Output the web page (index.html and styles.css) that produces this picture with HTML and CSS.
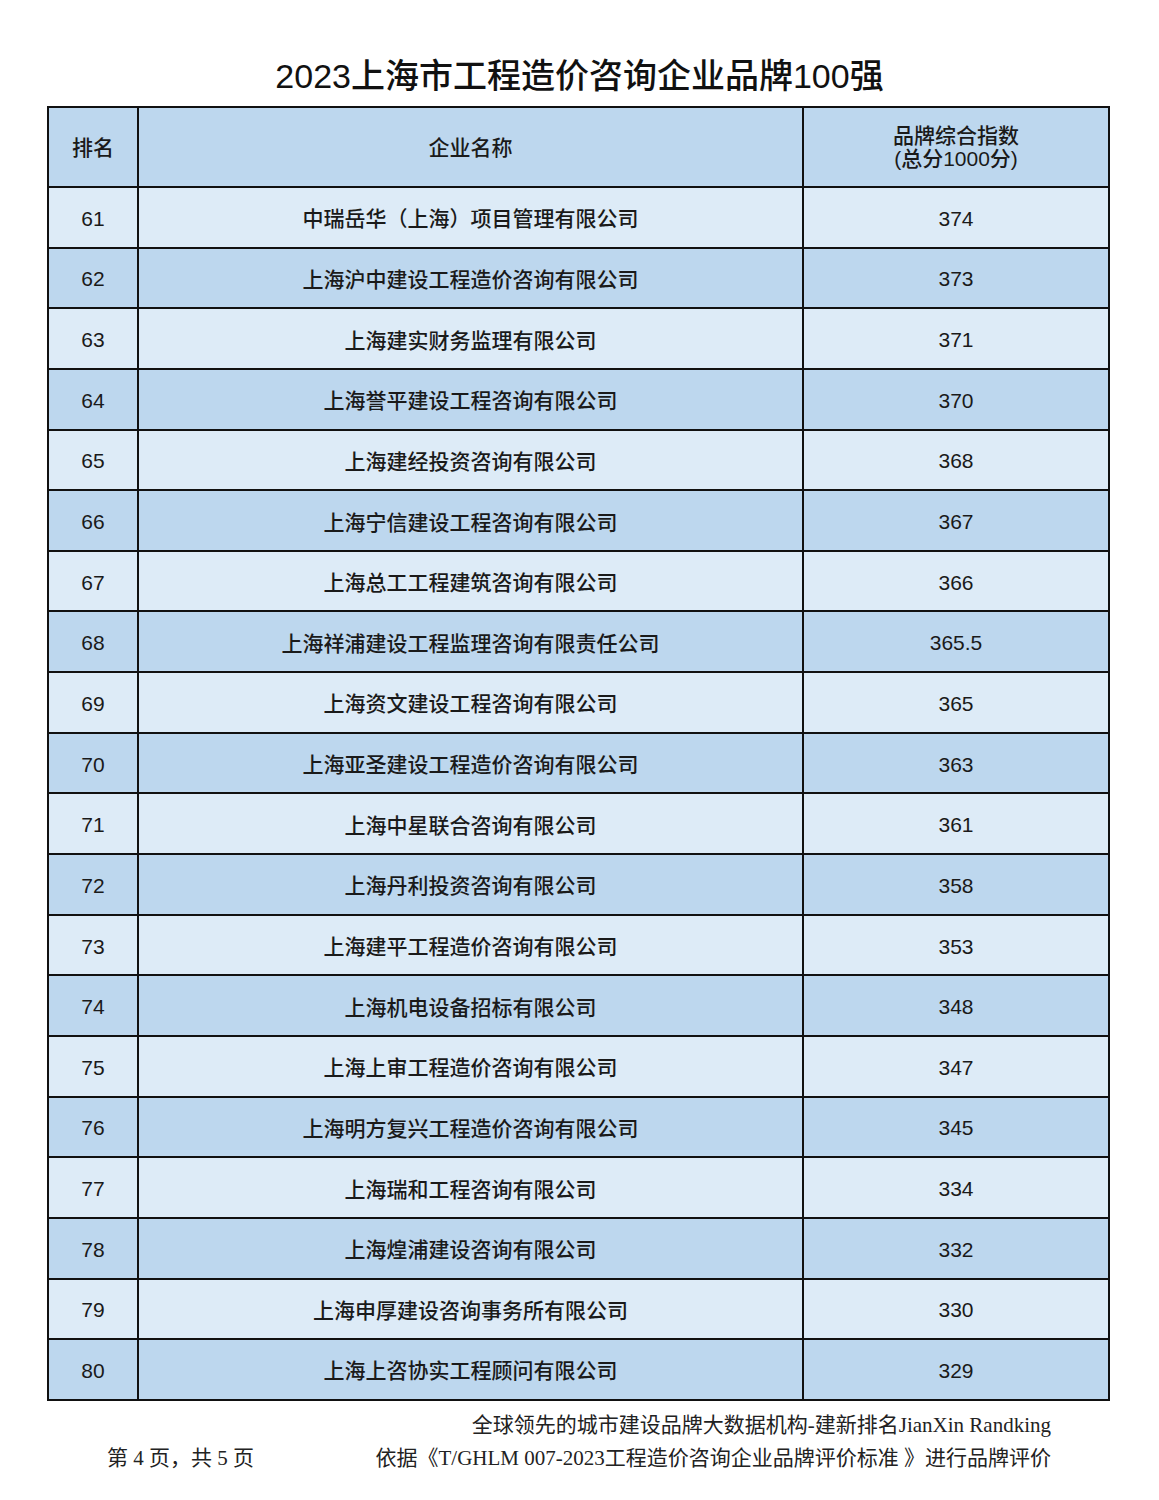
FILE: index.html
```html
<!DOCTYPE html>
<html lang="zh-CN">
<head>
<meta charset="utf-8">
<title>2023上海市工程造价咨询企业品牌100强</title>
<link rel="stylesheet" href="styles.css">
</head>
<body>
<div class="page">
  <h1 class="title">2023上海市工程造价咨询企业品牌100强</h1>
  <table class="rank">
    <colgroup>
      <col class="c-rank"><col class="c-name"><col class="c-score">
    </colgroup>
    <thead>
      <tr class="head">
        <th>排名</th>
        <th>企业名称</th>
        <th>品牌综合指数<br>(总分1000分)</th>
      </tr>
    </thead>
    <tbody>
      <tr class="lt"><td>61</td><td>中瑞岳华（上海）项目管理有限公司</td><td>374</td></tr>
      <tr class="dk"><td>62</td><td>上海沪中建设工程造价咨询有限公司</td><td>373</td></tr>
      <tr class="lt"><td>63</td><td>上海建实财务监理有限公司</td><td>371</td></tr>
      <tr class="dk"><td>64</td><td>上海誉平建设工程咨询有限公司</td><td>370</td></tr>
      <tr class="lt"><td>65</td><td>上海建经投资咨询有限公司</td><td>368</td></tr>
      <tr class="dk"><td>66</td><td>上海宁信建设工程咨询有限公司</td><td>367</td></tr>
      <tr class="lt"><td>67</td><td>上海总工工程建筑咨询有限公司</td><td>366</td></tr>
      <tr class="dk"><td>68</td><td>上海祥浦建设工程监理咨询有限责任公司</td><td>365.5</td></tr>
      <tr class="lt"><td>69</td><td>上海资文建设工程咨询有限公司</td><td>365</td></tr>
      <tr class="dk"><td>70</td><td>上海亚圣建设工程造价咨询有限公司</td><td>363</td></tr>
      <tr class="lt"><td>71</td><td>上海中星联合咨询有限公司</td><td>361</td></tr>
      <tr class="dk"><td>72</td><td>上海丹利投资咨询有限公司</td><td>358</td></tr>
      <tr class="lt"><td>73</td><td>上海建平工程造价咨询有限公司</td><td>353</td></tr>
      <tr class="dk"><td>74</td><td>上海机电设备招标有限公司</td><td>348</td></tr>
      <tr class="lt"><td>75</td><td>上海上审工程造价咨询有限公司</td><td>347</td></tr>
      <tr class="dk"><td>76</td><td>上海明方复兴工程造价咨询有限公司</td><td>345</td></tr>
      <tr class="lt"><td>77</td><td>上海瑞和工程咨询有限公司</td><td>334</td></tr>
      <tr class="dk"><td>78</td><td>上海煌浦建设咨询有限公司</td><td>332</td></tr>
      <tr class="lt"><td>79</td><td>上海申厚建设咨询事务所有限公司</td><td>330</td></tr>
      <tr class="dk"><td>80</td><td>上海上咨协实工程顾问有限公司</td><td>329</td></tr>
    </tbody>
  </table>
  <div class="footer">
    <div class="foot-line1">全球领先的城市建设品牌大数据机构-建新排名JianXin Randking</div>
    <div class="foot-line2">
      <span class="pageno">第 4 页，共 5 页</span>
      <span class="basis">依据《T/GHLM 007-2023工程造价咨询企业品牌评价标准 》进行品牌评价</span>
    </div>
  </div>
</div>
</body>
</html>
```

FILE: styles.css
```css
html, body {
  margin: 0;
  padding: 0;
  background: #ffffff;
}

.page {
  width: 1159px;
  padding-top: 54px;
  font-family: "Liberation Sans", "Noto Sans CJK SC", sans-serif;
  color: #1a1a1a;
}

.title {
  margin: 0 0 8px 0;
  text-align: center;
  font-size: 34px;
  font-weight: 500;
  line-height: 44px;
  color: #111;
}

.rank {
  margin-left: 47px;
  width: 1061px;
  border-collapse: collapse;
  table-layout: fixed;
  border: 2px solid #111;
}

.c-rank { width: 90px; }
.c-name { width: 665px; }
.c-score { width: 306px; }

.rank th,
.rank td {
  border: 2px solid #111;
  padding: 0;
  text-align: center;
  vertical-align: middle;
  font-size: 21px;
  font-weight: 500;
  color: #1a1a1a;
}

.rank th {
  line-height: 23px;
}

.rank td:first-child,
.rank td:last-child {
  padding-top: 3px;
}

.head {
  height: 80px;
  background: #bdd7ee;
}

.rank tbody tr {
  height: 60.65px;
}

.lt { background: #ddebf7; }
.dk { background: #bdd7ee; }

.footer {
  font-family: "Liberation Serif", "Noto Sans CJK SC", serif;
  font-size: 21px;
  color: #222;
  padding-top: 11px;
}

.foot-line1 {
  text-align: right;
  padding-right: 108px;
  line-height: 26px;
}

.foot-line2 {
  display: flex;
  justify-content: space-between;
  padding-left: 107px;
  padding-right: 108px;
  margin-top: 7px;
  line-height: 26px;
}
```
